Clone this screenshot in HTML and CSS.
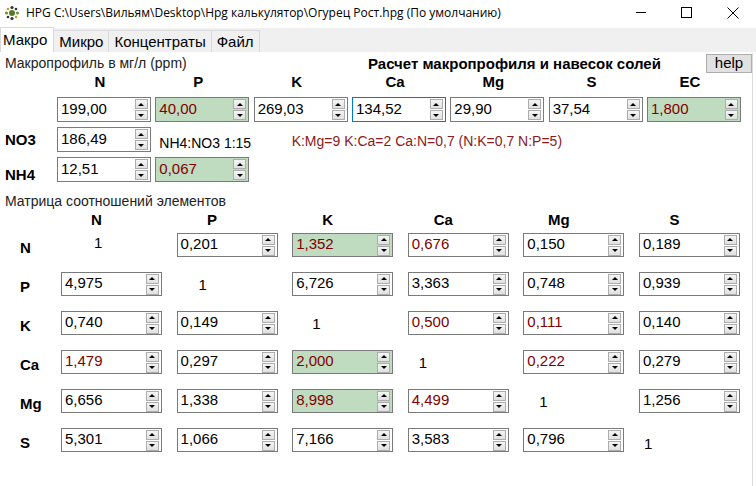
FILE: index.html
```html
<!DOCTYPE html>
<html lang="ru">
<head>
  <meta charset="UTF-8" />
  <title>HPG</title>
  <link rel="stylesheet" href="styles.css">
</head>
<body>
  <div class="window">
    <!-- заголовок окна -->
    <div class="titlebar">
      <svg class="app-icon" width="16" height="16" viewBox="0 0 16 16">
        <circle cx="8" cy="8" r="3" fill="#5a7a2a"/>
        <circle cx="8" cy="2.5" r="1.6" fill="#333"/>
        <circle cx="8" cy="13.5" r="1.6" fill="#333"/>
        <circle cx="2.5" cy="8" r="1.6" fill="#6a9a30"/>
        <circle cx="13.5" cy="8" r="1.6" fill="#6a9a30"/>
        <circle cx="4" cy="4" r="1.3" fill="#c0a020"/>
        <circle cx="12" cy="4" r="1.3" fill="#333"/>
        <circle cx="4" cy="12" r="1.3" fill="#333"/>
        <circle cx="12" cy="12" r="1.3" fill="#c0a020"/>
      </svg>
      <span class="title">HPG C:\Users\Вильям\Desktop\Hpg калькулятор\Огурец Рост.hpg (По умолчанию)</span>
      <div class="controls">
        <svg width="46" height="28" viewBox="0 0 46 28"><line x1="18" y1="12.5" x2="28" y2="12.5" stroke="#000" stroke-width="1"/></svg>
        <svg width="46" height="28" viewBox="0 0 46 28"><rect x="17.5" y="7.5" width="10" height="10" fill="none" stroke="#000" stroke-width="1"/></svg>
        <svg width="46" height="28" viewBox="0 0 46 28"><path d="M17.5 7.5 L28.5 18.5 M28.5 7.5 L17.5 18.5" stroke="#000" stroke-width="1"/></svg>
      </div>
    </div>

    <!-- вкладки -->
    <div class="tabs">
      <div class="tab active">Макро</div>
      <div class="tab">Микро</div>
      <div class="tab">Концентраты</div>
      <div class="tab">Файл</div>
    </div>

    <div class="page">
      <div class="head-row">
        <span class="caption">Макропрофиль в мг/л (ppm)</span>
        <span class="big-title">Расчет макропрофиля и навесок солей</span>
        <button class="help">help</button>
      </div>

      <!-- макропрофиль -->
      <div class="macro">
        <div></div>
        <div class="col-head">N</div>
        <div class="col-head">P</div>
        <div class="col-head">K</div>
        <div class="col-head">Ca</div>
        <div class="col-head">Mg</div>
        <div class="col-head">S</div>
        <div class="col-head">EC</div>

        <div></div>
        <div class="box"><span class="val">199,00</span><span class="spin"><i class="up"></i><i class="dn"></i></span></div>
        <div class="box green"><span class="val">40,00</span><span class="spin"><i class="up"></i><i class="dn"></i></span></div>
        <div class="box"><span class="val">269,03</span><span class="spin"><i class="up"></i><i class="dn"></i></span></div>
        <div class="box focus"><span class="val">134,52</span><span class="spin"><i class="up"></i><i class="dn"></i></span></div>
        <div class="box"><span class="val">29,90</span><span class="spin"><i class="up"></i><i class="dn"></i></span></div>
        <div class="box"><span class="val">37,54</span><span class="spin"><i class="up"></i><i class="dn"></i></span></div>
        <div class="box green"><span class="val">1,800</span><span class="spin"><i class="up"></i><i class="dn"></i></span></div>

        <div class="row-label">NO3</div>
        <div class="box"><span class="val">186,49</span><span class="spin"><i class="up"></i><i class="dn"></i></span></div>
        <div class="ratio-note">NH4:NO3 1:15</div>
        <div class="ratio-red">K:Mg=9 K:Ca=2 Ca:N=0,7 (N:K=0,7 N:P=5)</div>

        <div class="row-label low">NH4</div>
        <div class="box"><span class="val">12,51</span><span class="spin"><i class="up"></i><i class="dn"></i></span></div>
        <div class="box green"><span class="val">0,067</span><span class="spin"><i class="up"></i><i class="dn"></i></span></div>
      </div>

      <div class="caption matrix-title">Матрица соотношений элементов</div>

      <!-- матрица соотношений -->
      <div class="m-heads">
        <div></div>
        <div class="m-head">N</div>
        <div class="m-head">P</div>
        <div class="m-head">K</div>
        <div class="m-head">Ca</div>
        <div class="m-head">Mg</div>
        <div class="m-head">S</div>
      </div>
      <div class="matrix">
        <div class="m-label">N</div>
        <div class="one c1 up-a">1</div>
        <div class="box"><span class="val">0,201</span><span class="spin"><i class="up"></i><i class="dn"></i></span></div>
        <div class="box green"><span class="val">1,352</span><span class="spin"><i class="up"></i><i class="dn"></i></span></div>
        <div class="box red"><span class="val">0,676</span><span class="spin"><i class="up"></i><i class="dn"></i></span></div>
        <div class="box"><span class="val">0,150</span><span class="spin"><i class="up"></i><i class="dn"></i></span></div>
        <div class="box"><span class="val">0,189</span><span class="spin"><i class="up"></i><i class="dn"></i></span></div>

        <div class="m-label">P</div>
        <div class="box"><span class="val">4,975</span><span class="spin"><i class="up"></i><i class="dn"></i></span></div>
        <div class="one c2">1</div>
        <div class="box"><span class="val">6,726</span><span class="spin"><i class="up"></i><i class="dn"></i></span></div>
        <div class="box"><span class="val">3,363</span><span class="spin"><i class="up"></i><i class="dn"></i></span></div>
        <div class="box"><span class="val">0,748</span><span class="spin"><i class="up"></i><i class="dn"></i></span></div>
        <div class="box"><span class="val">0,939</span><span class="spin"><i class="up"></i><i class="dn"></i></span></div>

        <div class="m-label">K</div>
        <div class="box"><span class="val">0,740</span><span class="spin"><i class="up"></i><i class="dn"></i></span></div>
        <div class="box"><span class="val">0,149</span><span class="spin"><i class="up"></i><i class="dn"></i></span></div>
        <div class="one c3">1</div>
        <div class="box red"><span class="val">0,500</span><span class="spin"><i class="up"></i><i class="dn"></i></span></div>
        <div class="box red"><span class="val">0,111</span><span class="spin"><i class="up"></i><i class="dn"></i></span></div>
        <div class="box"><span class="val">0,140</span><span class="spin"><i class="up"></i><i class="dn"></i></span></div>

        <div class="m-label">Ca</div>
        <div class="box red"><span class="val">1,479</span><span class="spin"><i class="up"></i><i class="dn"></i></span></div>
        <div class="box"><span class="val">0,297</span><span class="spin"><i class="up"></i><i class="dn"></i></span></div>
        <div class="box green"><span class="val">2,000</span><span class="spin"><i class="up"></i><i class="dn"></i></span></div>
        <div class="one c4">1</div>
        <div class="box red"><span class="val">0,222</span><span class="spin"><i class="up"></i><i class="dn"></i></span></div>
        <div class="box"><span class="val">0,279</span><span class="spin"><i class="up"></i><i class="dn"></i></span></div>

        <div class="m-label">Mg</div>
        <div class="box"><span class="val">6,656</span><span class="spin"><i class="up"></i><i class="dn"></i></span></div>
        <div class="box"><span class="val">1,338</span><span class="spin"><i class="up"></i><i class="dn"></i></span></div>
        <div class="box green"><span class="val">8,998</span><span class="spin"><i class="up"></i><i class="dn"></i></span></div>
        <div class="box red"><span class="val">4,499</span><span class="spin"><i class="up"></i><i class="dn"></i></span></div>
        <div class="one c5">1</div>
        <div class="box"><span class="val">1,256</span><span class="spin"><i class="up"></i><i class="dn"></i></span></div>

        <div class="m-label">S</div>
        <div class="box"><span class="val">5,301</span><span class="spin"><i class="up"></i><i class="dn"></i></span></div>
        <div class="box"><span class="val">1,066</span><span class="spin"><i class="up"></i><i class="dn"></i></span></div>
        <div class="box"><span class="val">7,166</span><span class="spin"><i class="up"></i><i class="dn"></i></span></div>
        <div class="box"><span class="val">3,583</span><span class="spin"><i class="up"></i><i class="dn"></i></span></div>
        <div class="box"><span class="val">0,796</span><span class="spin"><i class="up"></i><i class="dn"></i></span></div>
        <div class="one c6 down-a">1</div>
      </div>
    </div>
  </div>
</body>
</html>
```

FILE: styles.css
```css
* {
  box-sizing: border-box;
  margin: 0;
  padding: 0;
}
body {
  font-family: "Liberation Sans", Arial, sans-serif;
  font-size: 14px;
  color: #000;
  background: #fff;
  width: 756px;
  height: 486px;
  overflow: hidden;
}
/* заголовок окна */
.titlebar {
  height: 28px;
  display: flex;
  align-items: center;
  background: #fff;
}
.app-icon {
  margin-left: 4px;
  margin-top: -2px;
}
.title {
  font-family: "Open Sans", "Noto Sans", sans-serif;
  font-size: 12px;
  margin-left: 6px;
  margin-top: -4px;
  color: #000;
}
.controls {
  margin-left: auto;
  display: flex;
}
.controls svg {
  display: block;
}
/* вкладки */
.tabs {
  height: 24px;
  background: #f0f0f0;
  display: flex;
  align-items: flex-end;
  padding-left: 1px;
}
.tab {
  height: 22px;
  padding: 0 5px;
  font-size: 15px;
  line-height: 21px;
  border: 1px solid #d9d9d9;
  border-bottom: none;
  margin-left: -1px;
  background: #f0f0f0;
}
.tab.active {
  height: 25px;
  background: #fff;
  line-height: 24px;
  padding: 0 6px 0 2px;
  position: relative;
  z-index: 1;
}
/* страница */
.page {
  height: 434px;
  border-right: 1px solid #d9d9d9;
  width: 753px;
}
.head-row {
  display: flex;
  align-items: center;
  height: 20px;
  padding-left: 5px;
  margin-top: 1px;
}
.caption {
  font-size: 14px;
  color: #222;
}
.head-row .caption {
  width: 363px;
}
.big-title {
  font-weight: bold;
  font-size: 15px;
}
.help {
  margin-left: auto;
  width: 46px;
  height: 19px;
  font-family: inherit;
  font-size: 15px;
  line-height: 16px;
  background: #e1e1e1;
  border: 1px solid #adadad;
  color: #000;
}
/* макропрофиль */
.macro {
  display: grid;
  grid-template-columns: 47.67px repeat(7, 94px);
  column-gap: 4.33px;
  grid-template-rows: 20px 25px 25px 25px;
  row-gap: 5px;
  padding-left: 5px;
  margin-top: -1px;
}
.col-head {
  font-weight: bold;
  font-size: 15px;
  text-align: center;
  padding-right: 8px;
  line-height: 20px;
}
.row-label {
  font-weight: bold;
  font-size: 15px;
  align-self: center;
}
.row-label.low {
  align-self: end;
  margin-bottom: -1px;
}
.ratio-note {
  padding-left: 4px;
  align-self: end;
  line-height: 18px;
  font-size: 14px;
  white-space: nowrap;
}
.ratio-red {
  grid-column: 4 / span 5;
  padding-left: 38px;
  color: #8b1a1a;
  font-size: 14px;
  align-self: end;
  line-height: 22px;
  white-space: nowrap;
}
/* поле ввода со стрелками */
.box {
  display: flex;
  align-items: center;
  height: 25px;
  border: 1px solid #7a7a7a;
  background: #fff;
  padding: 0 2px 0 3px;
}
.box .val {
  flex: 1;
  font-size: 15px;
  line-height: 18px;
  margin-top: -2px;
}
.box.green {
  background: #c0dcc0;
  color: #800000;
}
.box.red {
  color: #800000;
}
.box.focus {
  border-color: #0078d7;
}
.spin {
  display: flex;
  flex-direction: column;
  gap: 1px;
  width: 13px;
}
.spin i {
  display: flex;
  align-items: center;
  justify-content: center;
  height: 10px;
  border: 1px solid #adadad;
  background: linear-gradient(#f5f5f5, #e0e0e0);
}
.spin i::before {
  content: "";
  border-left: 3px solid transparent;
  border-right: 3px solid transparent;
}
.spin .up::before {
  border-bottom: 3px solid #000;
}
.spin .dn::before {
  border-top: 3px solid #000;
}
/* матрица */
.matrix-title {
  padding-left: 5px;
  margin-top: 11px;
  line-height: 17px;
}
.m-heads,
.matrix {
  display: grid;
  grid-template-columns: 26.4px repeat(6, 101px);
  column-gap: 14.6px;
  padding-left: 20px;
}
.m-heads {
  height: 18px;
  margin-top: 1px;
}
.matrix {
  grid-template-rows: repeat(6, 24px);
  row-gap: 15px;
  margin-top: 4px;
}
.matrix .box {
  height: 24px;
}
.m-head {
  font-weight: bold;
  font-size: 15px;
  line-height: 18px;
  text-align: center;
  padding-right: 30px;
}
.m-label {
  font-weight: bold;
  font-size: 15px;
  align-self: center;
  margin-top: 4px;
}
.one {
  align-self: center;
  font-size: 15px;
}
.one.c1 { padding-left: 33px; }
.one.c2 { padding-left: 22px; }
.one.c3 { padding-left: 20px; }
.one.c4 { padding-left: 11px; }
.one.c5 { padding-left: 16px; }
.one.c6 { padding-left: 5px; }
.one.up-a {
  margin-top: -6px;
}
.one.down-a {
  margin-top: 6px;
}
```
